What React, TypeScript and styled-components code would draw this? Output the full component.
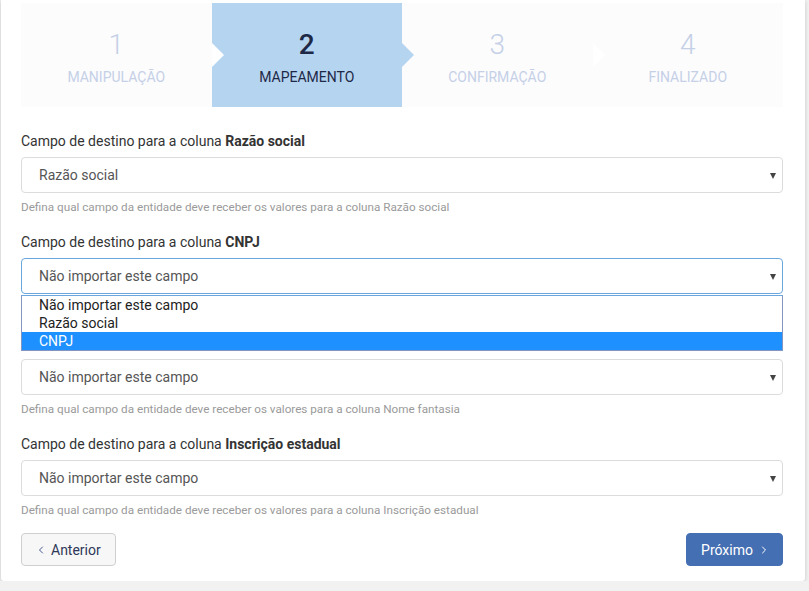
import { createGlobalStyle, styled } from "styled-components";
import { ChevronLeft, ChevronRight } from "lucide-react";

const GlobalStyle = createGlobalStyle`
  html, body {
    margin: 0;
    padding: 0;
    background: #f1f1f1;
    font-family: Roboto, "Liberation Sans", Arial, sans-serif;
  }
  * { box-sizing: border-box; }
`;

const Card = styled.div`
  margin-left: 1px;
  width: 804px;
  background: #fff;
  padding: 3px 22px 15px 20px;
  box-shadow: 0 1px 4px rgba(0, 0, 0, 0.18);
  border-radius: 0 0 3px 3px;
`;

const Stepper = styled.div`
  display: flex;
  height: 104px;
  background: #fcfcfd;
  margin-bottom: 24px;
`;

const Step = styled.div<{ $active?: boolean; $last?: boolean }>`
  position: relative;
  flex: 1;
  display: flex;
  flex-direction: column;
  align-items: center;
  padding-top: 26px;
  background: ${({ $active }) => ($active ? "#b5d4f0" : "transparent")};

  &::after {
    content: "";
    display: ${({ $last }) => ($last ? "none" : "block")};
    position: absolute;
    right: -12px;
    top: 40px;
    width: 0;
    height: 0;
    border-top: 12.5px solid transparent;
    border-bottom: 12.5px solid transparent;
    border-left: 12px solid ${({ $active }) => ($active ? "#b5d4f0" : "#ffffff")};
    z-index: 1;
  }
`;

const StepNumber = styled.div<{ $active?: boolean }>`
  font-size: 28px;
  line-height: 32px;
  font-weight: ${({ $active }) => ($active ? 500 : 300)};
  color: ${({ $active }) => ($active ? "#1e2847" : "#c5d0e7")};
`;

const StepLabel = styled.div<{ $active?: boolean }>`
  margin-top: 8px;
  font-size: 14px;
  line-height: 16px;
  text-transform: uppercase;
  color: ${({ $active }) => ($active ? "#1e2847" : "#c5d0e7")};
`;

const Field = styled.div`
  position: relative;
  margin-bottom: 17px;
`;

const Label = styled.div`
  font-size: 14px;
  line-height: 20px;
  color: #333;
  margin-bottom: 6px;

  b {
    font-weight: 700;
  }
`;

const Select = styled.div<{ $focused?: boolean }>`
  position: relative;
  height: 36px;
  display: flex;
  align-items: center;
  padding: 0 30px 0 17px;
  font-size: 14px;
  color: #555;
  background: #fff;
  border: 1px solid ${({ $focused }) => ($focused ? "#6aa7de" : "#dcdcdc")};
  border-radius: 4px;

  &::after {
    content: "";
    position: absolute;
    right: 6px;
    top: 15px;
    border-left: 3.5px solid transparent;
    border-right: 3.5px solid transparent;
    border-top: 6px solid #444;
  }
`;

const Help = styled.div`
  margin-top: 6px;
  font-size: 11.7px;
  line-height: 16px;
  color: #9a9a9a;
`;

const OptionList = styled.div`
  position: absolute;
  left: 0;
  right: 0;
  top: 63px;
  z-index: 5;
  background: #fff;
  border: 1px solid #8595c2;
  border-top: 1px solid #6aa7de;
`;

const Option = styled.div<{ $selected?: boolean }>`
  height: 18px;
  line-height: 18px;
  padding-left: 17px;
  font-size: 14px;
  color: ${({ $selected }) => ($selected ? "#fff" : "#222")};
  background: ${({ $selected }) => ($selected ? "#1e90ff" : "transparent")};
`;

const Actions = styled.div`
  display: flex;
  justify-content: space-between;
  margin-top: -2px;
`;

const Button = styled.button<{ $primary?: boolean }>`
  display: inline-flex;
  align-items: center;
  gap: ${({ $primary }) => ($primary ? "5px" : "4px")};
  height: 33px;
  padding: ${({ $primary }) => ($primary ? "0 12px 0 14px" : "0 14px 0 13px")};
  font-family: inherit;
  font-size: 14px;
  border-radius: 4px;
  cursor: pointer;
  color: ${({ $primary }) => ($primary ? "#fff" : "#2f3858")};
  background: ${({ $primary }) => ($primary ? "#456fb3" : "#f7f7f7")};
  border: 1px solid ${({ $primary }) => ($primary ? "#456fb3" : "#cfcfcf")};

  svg {
    color: ${({ $primary }) => ($primary ? "#fff" : "#4a5795")};
  }
`;

const steps = ["Manipulação", "Mapeamento", "Confirmação", "Finalizado"];

const fields = [
  { column: "Razão social", value: "Razão social" },
  { column: "CNPJ", value: "Não importar este campo", open: true },
  { column: "Nome fantasia", value: "Não importar este campo" },
  { column: "Inscrição estadual", value: "Não importar este campo" },
];

const options = ["Não importar este campo", "Razão social", "CNPJ"];

export default function App() {
  return (
    <>
      <GlobalStyle />
      <Card>
        <Stepper>
          {steps.map((s, i) => (
            <Step key={s} $active={i === 1} $last={i === steps.length - 1}>
              <StepNumber $active={i === 1}>{i + 1}</StepNumber>
              <StepLabel $active={i === 1}>{s}</StepLabel>
            </Step>
          ))}
        </Stepper>

        {fields.map((f) => (
          <Field key={f.column}>
            <Label>
              Campo de destino para a coluna <b>{f.column}</b>
            </Label>
            <Select $focused={f.open}>{f.value}</Select>
            {f.open ? (
              <OptionList>
                {options.map((o) => (
                  <Option key={o} $selected={o === "CNPJ"}>
                    {o}
                  </Option>
                ))}
              </OptionList>
            ) : null}
            <Help>
              Defina qual campo da entidade deve receber os valores para a
              coluna {f.column}
            </Help>
          </Field>
        ))}

        <Actions>
          <Button>
            <ChevronLeft size={12} strokeWidth={2} />
            Anterior
          </Button>
          <Button $primary>
            Próximo
            <ChevronRight size={12} strokeWidth={2} />
          </Button>
        </Actions>
      </Card>
    </>
  );
}
